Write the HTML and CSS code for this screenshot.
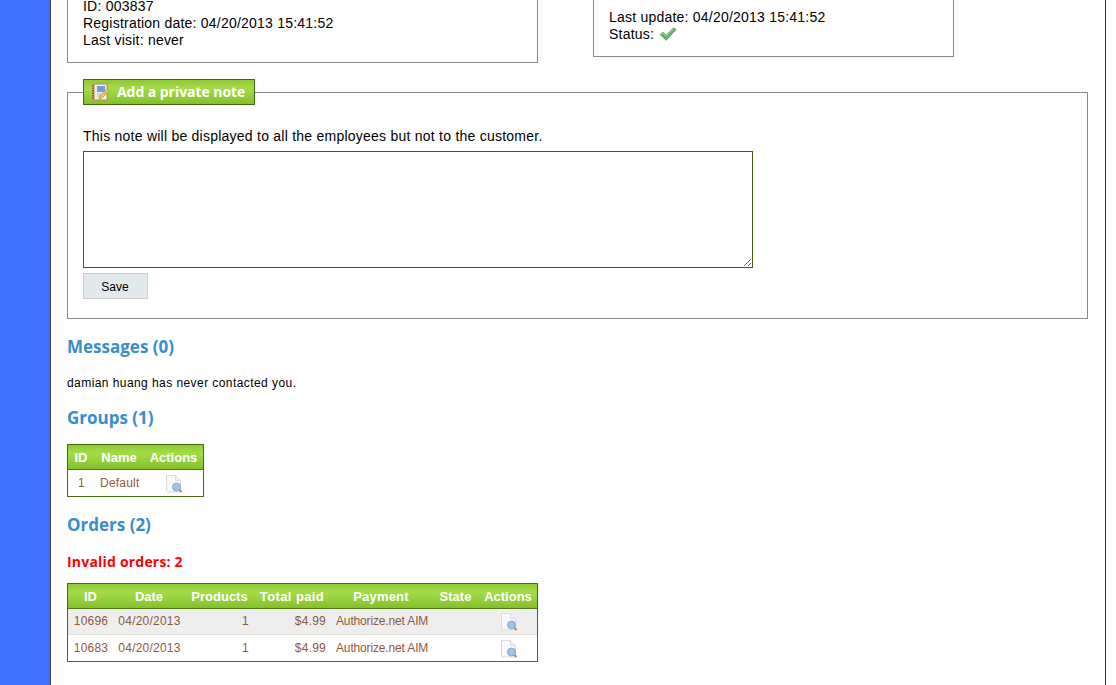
FILE: index.html
```html
<!DOCTYPE html>
<html lang="en">
<head>
  <meta charset="UTF-8" />
  <title>Customer</title>
  <link rel="stylesheet" href="styles.css">
</head>
<body>
  <div class="sidebar"></div>
  <div class="content">
    <div class="info-row">
      <div class="info-box info-left">
        ID: 003837<br>
        Registration date: 04/20/2013 15:41:52<br>
        Last visit: never
      </div>
      <div class="info-box info-right">
        Last update: 04/20/2013 15:41:52<br>
        Status:
        <svg class="check" width="18" height="14" viewBox="0 0 18 14">
          <path d="M1 7.5 L4 5 L7 8 L14.5 .8 L17.2 2.6 L7.2 13.4 Z" fill="#62b266" stroke="#4f9a58" stroke-width=".6"/>
          <path d="M2 7.4 L4 6 L7 9 L14.5 2" fill="none" stroke="#a8dcaa" stroke-width="1"/>
        </svg>
      </div>
    </div>

    <fieldset class="note">
      <legend class="note-title">
        <svg width="18" height="18" viewBox="0 0 18 18">
          <rect x="2" y="1" width="13" height="16" fill="#f4f1e4" stroke="#b08a5c"/>
          <path d="M1 2v14" stroke="#a8562c" stroke-width="2" stroke-dasharray="1.5 1"/>
          <rect x="5" y="3" width="8" height="6" fill="#6f9fd8"/>
          <path d="M5 11h5M5 13h3" stroke="#a9b4bf"/>
          <path d="M7 16 L8 13 L15 6 L17 8 L10 15 Z" fill="#edc45a" stroke="#b98a2c" stroke-width=".6"/>
        </svg>
        Add a private note
      </legend>
      <p class="note-help">This note will be displayed to all the employees but not to the customer.</p>
      <textarea class="note-text"></textarea>
      <button class="save-btn" type="button">Save</button>
    </fieldset>

    <h2>Messages (0)</h2>
    <p class="small-text">damian huang has never contacted you.</p>

    <h2 class="groups-title">Groups (1)</h2>
    <table class="grid groups">
      <thead>
        <tr><th class="g-id">ID</th><th class="g-name">Name</th><th class="g-act">Actions</th></tr>
      </thead>
      <tbody>
        <tr>
          <td class="center">1</td>
          <td class="left">Default</td>
          <td class="center">
            <svg class="doc" width="18" height="19" viewBox="0 0 18 19"><use href="#doc-icon"/></svg>
          </td>
        </tr>
      </tbody>
    </table>

    <h2>Orders (2)</h2>
    <p class="invalid">Invalid orders: 2</p>
    <table class="grid orders">
      <thead>
        <tr>
          <th class="o-id">ID</th><th class="o-date">Date</th><th class="o-prod">Products</th>
          <th class="o-total">Total paid</th><th class="o-pay">Payment</th><th class="o-state">State</th><th class="o-act">Actions</th>
        </tr>
      </thead>
      <tbody>
        <tr class="alt">
          <td class="center">10696</td><td class="center">04/20/2013</td><td class="right qty">1</td>
          <td class="right">$4.99</td><td class="left pay">Authorize.net AIM</td><td></td>
          <td class="center"><svg class="doc" width="18" height="19" viewBox="0 0 18 19"><use href="#doc-icon"/></svg></td>
        </tr>
        <tr>
          <td class="center">10683</td><td class="center">04/20/2013</td><td class="right qty">1</td>
          <td class="right">$4.99</td><td class="left pay">Authorize.net AIM</td><td></td>
          <td class="center"><svg class="doc" width="18" height="19" viewBox="0 0 18 19"><use href="#doc-icon"/></svg></td>
        </tr>
      </tbody>
    </table>
  </div>

  <svg class="defs" width="0" height="0">
    <symbol id="doc-icon" viewBox="0 0 18 19">
      <path d="M1.5 1.5h9l5 5v11.5h-13a1 1 0 0 1-1-1z" fill="#f8f9fa" stroke="#d8dce0"/>
      <path d="M10.5 1.5v5h5" fill="#eef0f3" stroke="#d8dce0"/>
      <circle cx="11.5" cy="13" r="4" fill="#a3c4e6" stroke="#86a9cc"/>
      <path d="M14.5 16l2 2" stroke="#c08050" stroke-width="2"/>
    </symbol>
  </svg>
</body>
</html>
```

FILE: styles.css
```css
html, body {
  margin: 0;
  padding: 0;
  height: 685px;
  overflow: hidden;
}

body {
  display: flex;
  background: #fff;
  font-family: "Liberation Sans", Arial, sans-serif;
  font-size: 14px;
  line-height: 17px;
  letter-spacing: .22px;
  color: #000;
}

.sidebar {
  width: 50px;
  background: #4170ff;
  border-right: 1px solid #444;
  flex: none;
}

.content {
  width: 1021px;
  height: 690px;
  padding: 0 17px 0 16px;
  margin-top: -5px;
  border-right: 1px solid #333;
  flex: none;
}

.info-row {
  display: flex;
  align-items: flex-start;
}

.info-box {
  border: 1px solid #888;
  border-top: none;
  box-sizing: border-box;
  padding-left: 15px;
}

.info-left {
  width: 471px;
  height: 68px;
  padding-top: 3px;
}

.info-right {
  width: 361px;
  height: 62px;
  margin-left: 55px;
  padding-top: 14px;
}

.check {
  vertical-align: -2px;
  margin-left: 1px;
}

.note {
  margin: 16px 0 0;
  padding: 0 15px 19px;
  height: 240px;
  box-sizing: border-box;
  border: 1px solid #888;
}

.note-title {
  display: flex;
  align-items: center;
  gap: 7px;
  width: 172px;
  height: 26px;
  box-sizing: border-box;
  padding: 0 8px 1px;
  border: 1px solid #44660f;
  background: linear-gradient(#8ec935, #a4dc49 35%, #84c02d);
  color: #fff;
  font-family: "Open Sans", sans-serif;
  font-size: 14px;
  font-weight: bold;
  letter-spacing: -.05px;
  white-space: nowrap;
}

.note-help {
  margin: 23px 0 6px;
  letter-spacing: .24px;
}

.note-text {
  display: block;
  width: 670px;
  height: 117px;
  box-sizing: border-box;
  border: 1px solid #3f5f0a;
  background: #fff;
}

.save-btn {
  display: block;
  margin-top: 5px;
  width: 65px;
  height: 26px;
  padding: 1px 6px 0 5px;
  background: #e2eaed;
  border: 1px solid #ccc;
  font-family: "Liberation Sans", Arial, sans-serif;
  font-size: 12px;
  color: #000;
}

h2 {
  margin: 18px 0 0;
  color: #3a8ccb;
  font-family: "Open Sans", sans-serif;
  font-size: 17px;
  font-weight: bold;
  line-height: 20px;
  letter-spacing: 0;
}

.groups-title {
  margin-top: 16px;
}

.small-text {
  margin: 18px 0 0;
  font-size: 12px;
  letter-spacing: .43px;
}

.invalid {
  margin: 18px 0 0;
  color: #f00;
  font-family: "Open Sans", sans-serif;
  font-weight: bold;
  font-size: 14px;
  letter-spacing: .2px;
}

.grid {
  margin-top: 16px;
  border-collapse: separate;
  border-spacing: 0;
  border: 1px solid #4a6a10;
  font-size: 12px;
  color: #8f5a3c;
  table-layout: fixed;
}

.orders {
  margin-top: 13px;
}

.grid th {
  height: 24px;
  padding: 0;
  background: linear-gradient(#8ec935, #a4dc49 35%, #84c02d);
  border-bottom: 1px solid #4f7a12;
  color: #fff;
  font-size: 13px;
  letter-spacing: 0;
  text-align: center;
}

.grid td {
  height: 26px;
  padding: 0;
}

.grid .alt td {
  height: 25px;
  background: #eee;
  border-bottom: 1px solid #e4e2d8;
}

.center { text-align: center; padding-left: 1px !important; }
.right { text-align: right; padding-right: 4px !important; }
.qty { padding-right: 5px !important; }
.left { text-align: left; padding-left: 6px !important; }
.pay { letter-spacing: -.15px; }

.doc {
  display: inline-block;
  vertical-align: middle;
}

.g-id { width: 26px; }
.g-name { width: 50px; }
.g-act { width: 59px; }

.o-id { width: 45px; }
.o-date { width: 72px; }
.o-prod { width: 69px; }
.grid .o-total { width: 76px; letter-spacing: .4px; }
.grid .o-pay { width: 102px; letter-spacing: .2px; }
.o-state { width: 47px; }
.o-act { width: 58px; }

.defs {
  position: absolute;
}
```
